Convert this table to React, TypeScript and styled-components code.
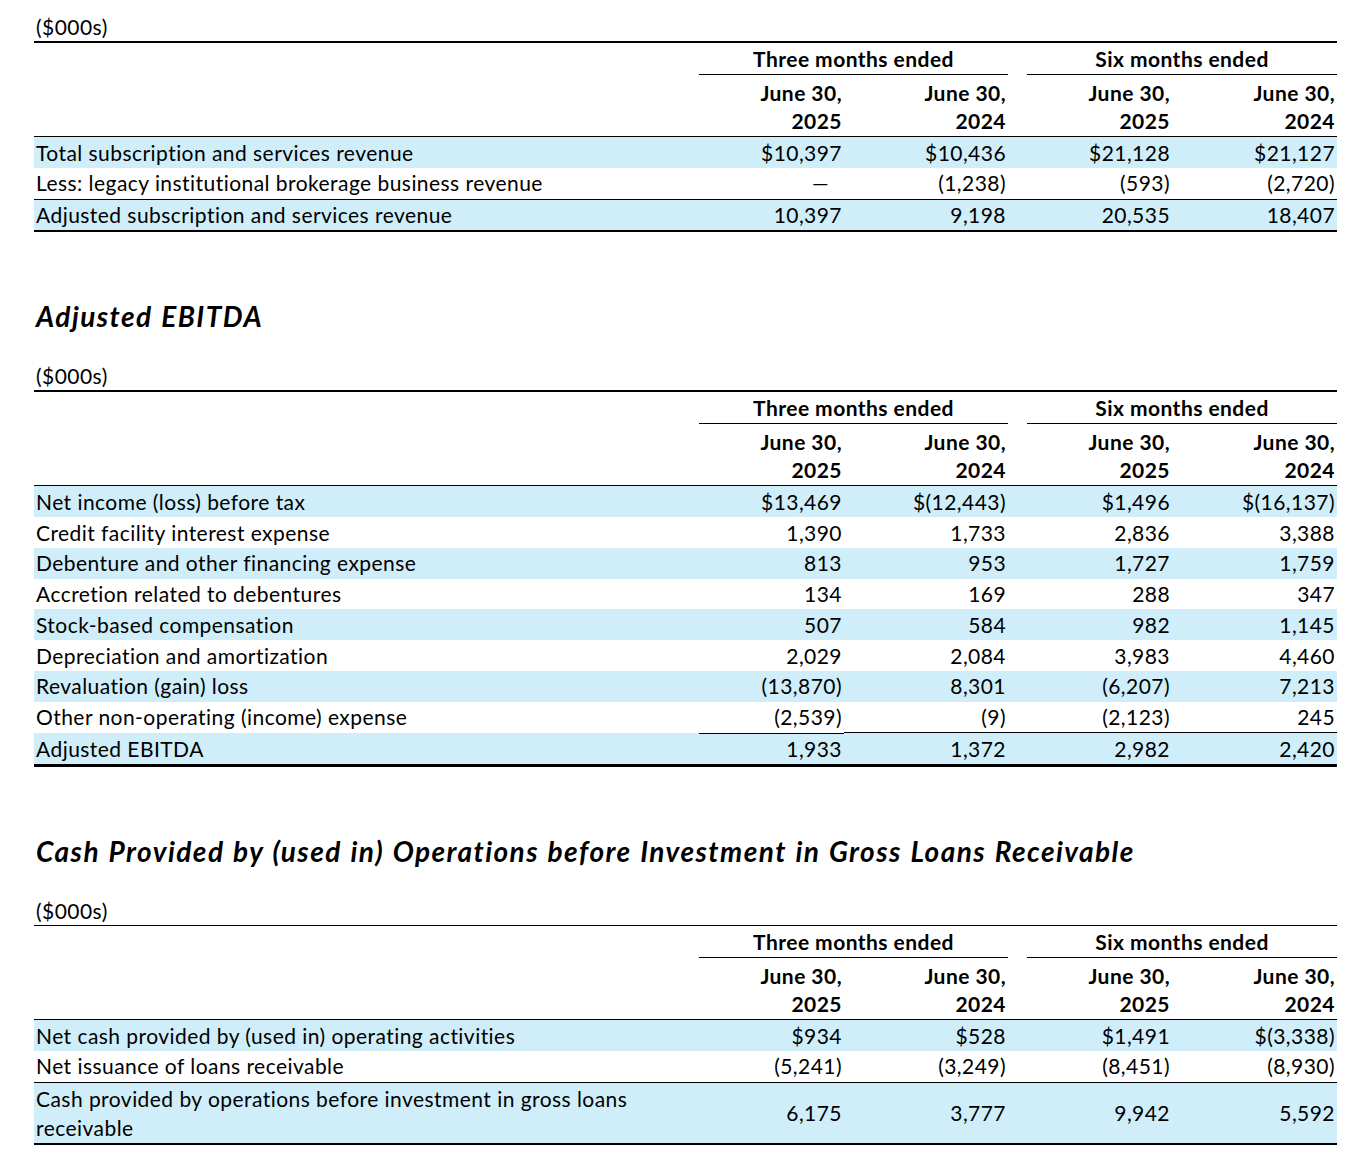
import React from "react";
import styled, { createGlobalStyle } from "styled-components";

const GlobalStyle = createGlobalStyle`
  body {
    margin: 0;
    background: #fff;
    color: #000;
    font-family: Lato, "Liberation Sans", sans-serif;
  }
`;

const Page = styled.div`
  width: 1303px;
  padding: 15px 0 30px 34px;
  letter-spacing: 0.45px;
`;

const Heading = styled.h2`
  margin: 67px 0 31px;
  padding-left: 2px;
  font-size: 28px;
  line-height: 34px;
  font-weight: 700;
  font-style: italic;
  letter-spacing: 1.45px;
  word-spacing: 1px;
`;

const Unit = styled.div<{ $thin?: boolean }>`
  padding: 0 0 2px 2px;
  font-size: 21px;
  line-height: 24px;
  border-bottom: ${(p) => (p.$thin ? 1 : 2)}px solid #000;
`;

const Table = styled.table<{ $bottom: number }>`
  width: 100%;
  border-collapse: collapse;
  table-layout: fixed;
  font-size: 21px;
  border-bottom: ${(p) => p.$bottom}px solid #000;
`;

const GroupCell = styled.th`
  padding: 4px 0 0 19px;
  font-weight: 700;
`;

const GroupLabel = styled.div`
  padding-bottom: 3px;
  line-height: 24px;
  text-align: center;
  border-bottom: 1px solid #000;
`;

const DateCell = styled.th`
  padding: 4px 2px 1px 0;
  line-height: 28px;
  font-weight: 700;
  text-align: right;
  border-bottom: 1px solid #000;
`;

const Row = styled.tr<{ $shade: boolean }>`
  background: ${(p) => (p.$shade ? "#cfeefa" : "#fff")};
`;

const LabelCell = styled.td<{ $rule: boolean; $tall?: boolean }>`
  padding: ${(p) => (p.$tall ? "1px 0 1px 2px" : "3.5px 0 3.25px 2px")};
  line-height: ${(p) => (p.$tall ? 29 : 24)}px;
  text-align: left;
  border-top: ${(p) => (p.$rule ? "1px solid #000" : "none")};
`;

// $inset draws the rule only from the underline start of the column group
const NumCell = styled.td<{ $rule: boolean; $inset?: boolean }>`
  padding: 3.5px 2px 3.25px 0;
  line-height: 24px;
  text-align: right;
  vertical-align: middle;
  border-top: ${(p) => (p.$rule && !p.$inset ? "1px solid #000" : "none")};
  background-image: ${(p) => (p.$inset ? "linear-gradient(#000, #000)" : "none")};
  background-size: calc(100% - 19px) 1px;
  background-position: right top;
  background-repeat: no-repeat;
`;

const Dash = styled.span`
  margin-right: 13px;
`;

type Line = {
  label: React.ReactNode;
  values: string[];
  rule?: "full" | "values";
  tall?: boolean;
};

type Section = {
  heading?: string;
  thinUnit?: boolean;
  bottom: number;
  rows: Line[];
};

const sections: Section[] = [
  {
    bottom: 2,
    rows: [
      { label: "Total subscription and services revenue", values: ["$10,397", "$10,436", "$21,128", "$21,127"] },
      { label: "Less: legacy institutional brokerage business revenue", values: ["—", "(1,238)", "(593)", "(2,720)"] },
      { label: "Adjusted subscription and services revenue", values: ["10,397", "9,198", "20,535", "18,407"], rule: "full" },
    ],
  },
  {
    heading: "Adjusted EBITDA",
    bottom: 3,
    rows: [
      { label: "Net income (loss) before tax", values: ["$13,469", "$(12,443)", "$1,496", "$(16,137)"] },
      { label: "Credit facility interest expense", values: ["1,390", "1,733", "2,836", "3,388"] },
      { label: "Debenture and other financing expense", values: ["813", "953", "1,727", "1,759"] },
      { label: "Accretion related to debentures", values: ["134", "169", "288", "347"] },
      { label: "Stock-based compensation", values: ["507", "584", "982", "1,145"] },
      { label: "Depreciation and amortization", values: ["2,029", "2,084", "3,983", "4,460"] },
      { label: "Revaluation (gain) loss", values: ["(13,870)", "8,301", "(6,207)", "7,213"] },
      { label: "Other non-operating (income) expense", values: ["(2,539)", "(9)", "(2,123)", "245"] },
      { label: "Adjusted EBITDA", values: ["1,933", "1,372", "2,982", "2,420"], rule: "values" },
    ],
  },
  {
    heading: "Cash Provided by (used in) Operations before Investment in Gross Loans Receivable",
    thinUnit: true,
    bottom: 2,
    rows: [
      { label: "Net cash provided by (used in) operating activities", values: ["$934", "$528", "$1,491", "$(3,338)"] },
      { label: "Net issuance of loans receivable", values: ["(5,241)", "(3,249)", "(8,451)", "(8,930)"] },
      {
        label: (
          <>
            Cash provided by operations before investment in gross loans
            <br />
            receivable
          </>
        ),
        values: ["6,175", "3,777", "9,942", "5,592"],
        rule: "full",
        tall: true,
      },
    ],
  },
];

const years = ["2025", "2024", "2025", "2024"];

function ReconTable({ section }: { section: Section }) {
  return (
    <>
      {section.heading && <Heading>{section.heading}</Heading>}
      <Unit $thin={section.thinUnit}>($000s)</Unit>
      <Table $bottom={section.bottom}>
        <colgroup>
          <col style={{ width: 646 }} />
          <col style={{ width: 164 }} />
          <col style={{ width: 164 }} />
          <col style={{ width: 164 }} />
          <col style={{ width: 165 }} />
        </colgroup>
        <thead>
          <tr>
            <th />
            <GroupCell colSpan={2}>
              <GroupLabel>Three months ended</GroupLabel>
            </GroupCell>
            <GroupCell colSpan={2}>
              <GroupLabel>Six months ended</GroupLabel>
            </GroupCell>
          </tr>
          <tr>
            <DateCell />
            {years.map((y, i) => (
              <DateCell key={i}>
                June 30,
                <br />
                {y}
              </DateCell>
            ))}
          </tr>
        </thead>
        <tbody>
          {section.rows.map((row, i) => (
            <Row key={i} $shade={i % 2 === 0}>
              <LabelCell $rule={row.rule === "full"} $tall={row.tall}>
                {row.label}
              </LabelCell>
              {row.values.map((v, j) => (
                <NumCell key={j} $rule={!!row.rule} $inset={row.rule === "values" && j === 0}>
                  {v === "—" ? <Dash>—</Dash> : v}
                </NumCell>
              ))}
            </Row>
          ))}
        </tbody>
      </Table>
    </>
  );
}

export default function App() {
  return (
    <>
      <GlobalStyle />
      <Page>
        {sections.map((s, i) => (
          <ReconTable key={i} section={s} />
        ))}
      </Page>
    </>
  );
}
